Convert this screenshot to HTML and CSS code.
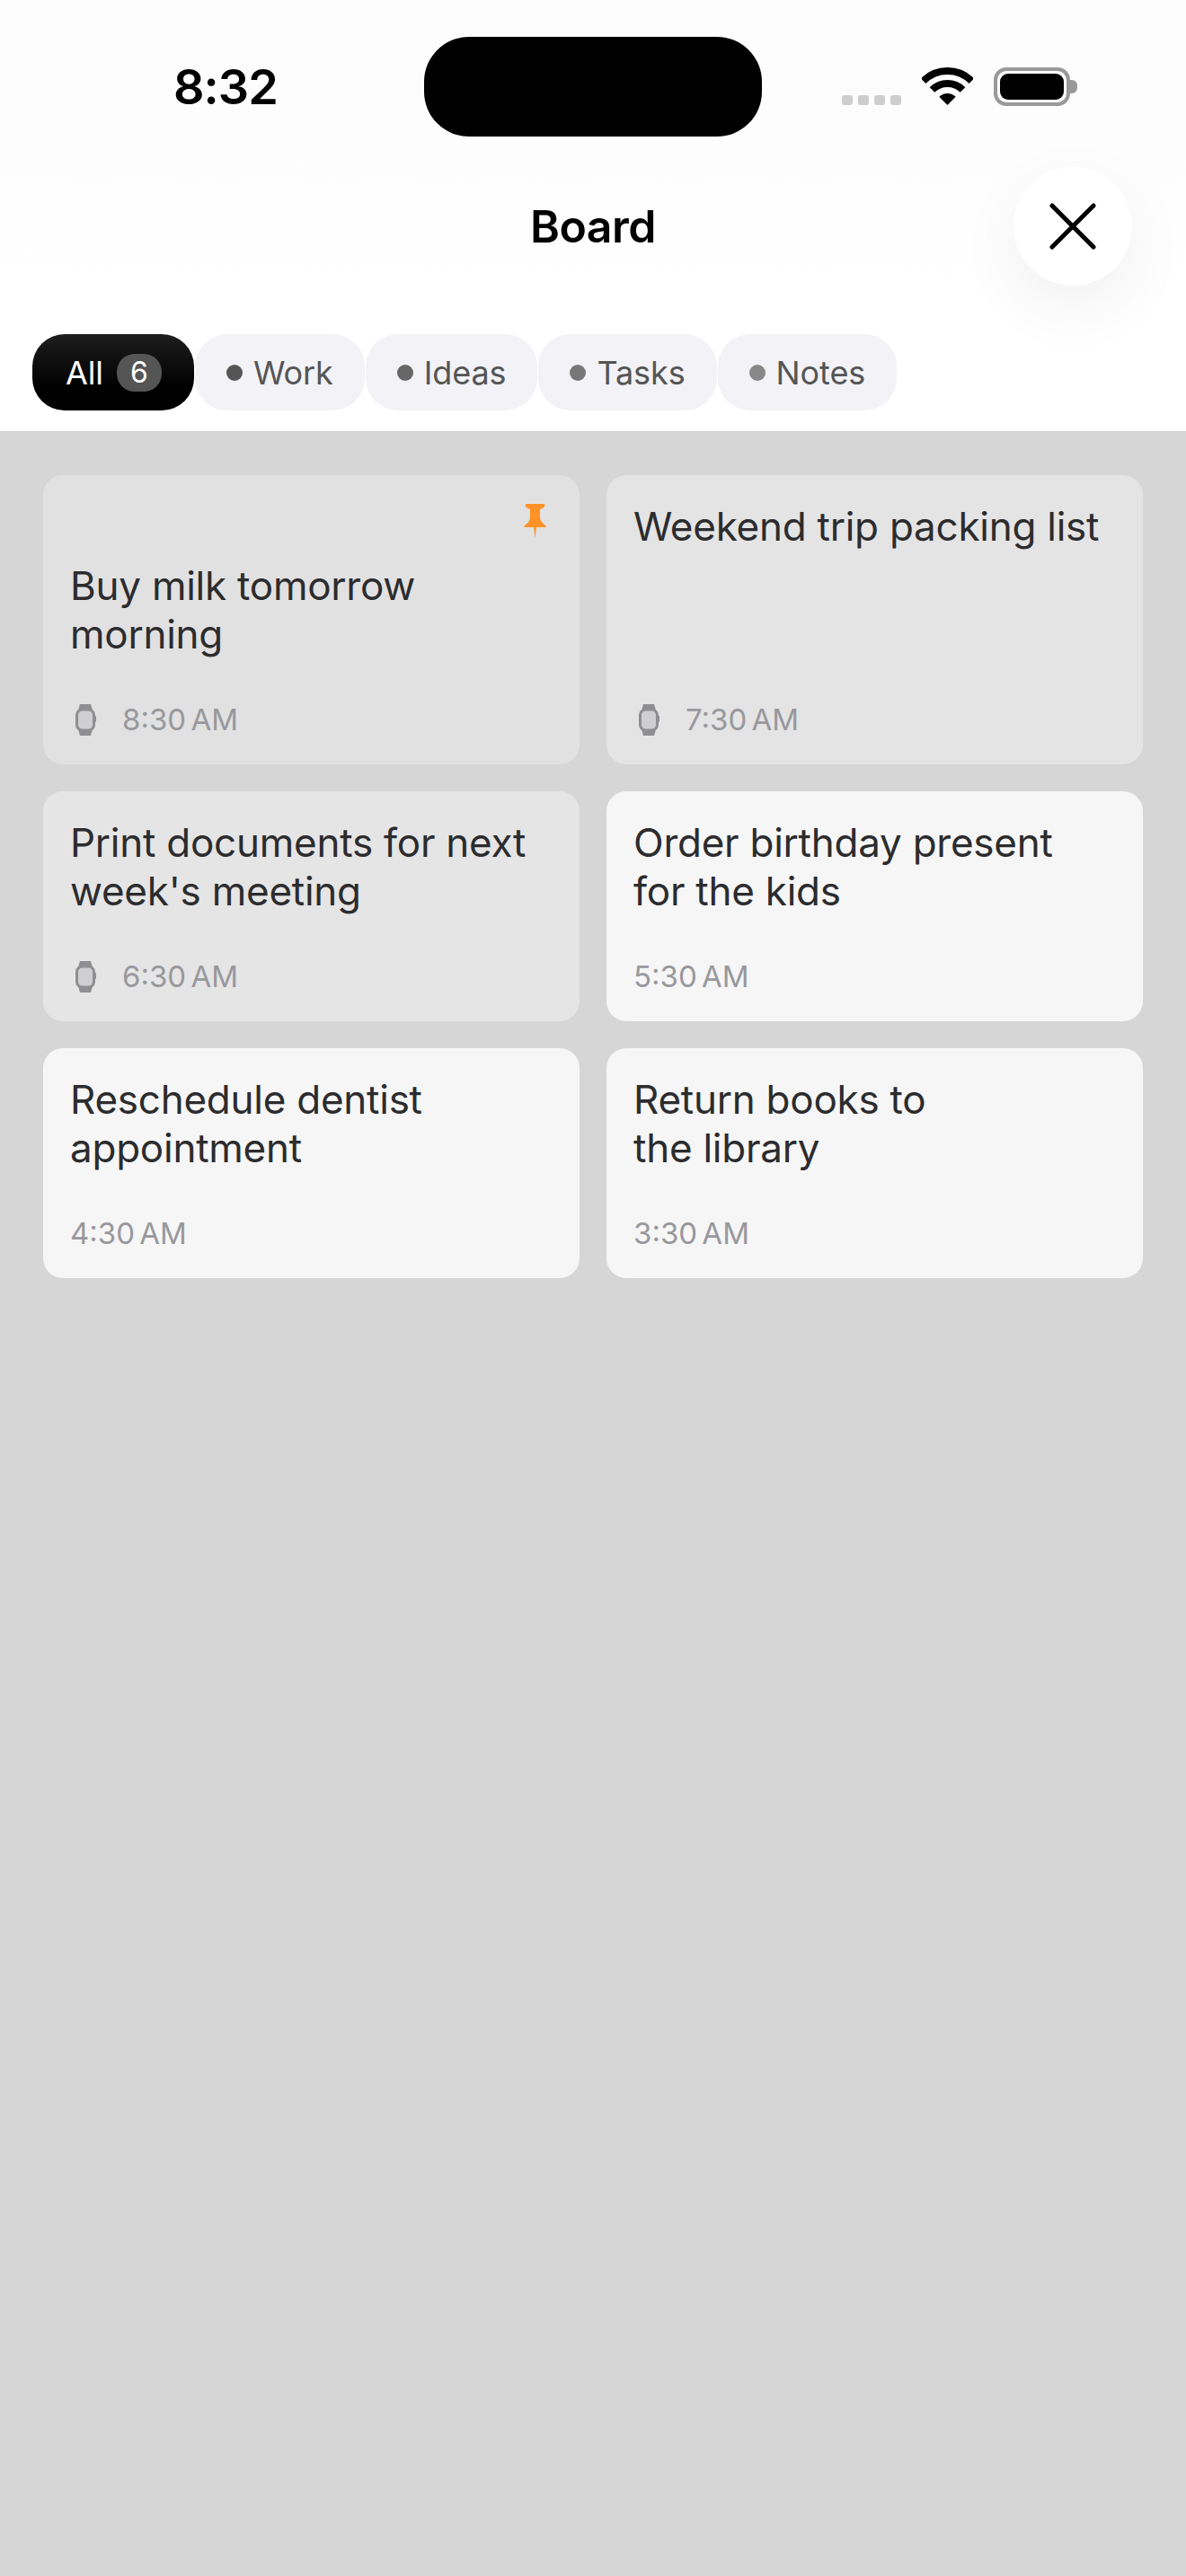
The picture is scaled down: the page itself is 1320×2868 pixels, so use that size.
FILE: index.html
```html
<!DOCTYPE html>
<html lang="en">
<head>
<meta charset="utf-8">
<title>Board</title>
<link rel="stylesheet" href="styles.css">
</head>
<body>
<header class="header">
  <div class="status">
    <div class="clock">8:32</div>
    <div class="island"></div>
    <div class="indicators">
      <div class="signal"><i></i><i></i><i></i><i></i></div>
      <svg class="wifi" width="57" height="42" viewBox="0 0 57 42"><path d="M1.63 15.13A38 38 0 0 1 55.37 15.13" fill="none" stroke="#000" stroke-width="8"/><path d="M11.53 25.03A24 24 0 0 1 45.47 25.03" fill="none" stroke="#000" stroke-width="8"/><path d="M28.5 42L19.3 32.8A13 13 0 0 1 37.7 32.8Z" fill="#000"/></svg>
      <div class="battery"><div class="battery-fill"></div><div class="battery-nub"></div></div>
    </div>
  </div>
  <div class="nav">
    <h1 class="title">Board</h1>
    <button class="close" type="button" aria-label="Close">
      <svg width="52" height="52" viewBox="0 0 52 52"><path d="M3 3L49 49M49 3L3 49" fill="none" stroke="#000" stroke-width="5" stroke-linecap="round"/></svg>
    </button>
  </div>
  <div class="tabs">
    <div class="tab tab-active">All<span class="badge">6</span></div>
    <div class="tab"><span class="dot dot-work"></span>Work</div>
    <div class="tab"><span class="dot dot-ideas"></span>Ideas</div>
    <div class="tab"><span class="dot dot-tasks"></span>Tasks</div>
    <div class="tab"><span class="dot dot-notes"></span>Notes</div>
  </div>
</header>
<main class="board">
  <article class="card card-a">
    <div class="pin-row">
      <svg width="25" height="38" viewBox="0 0 25 38"><path d="M3 0H22Q24 0 23 3Q22 5 18 6L18 14Q18 20 23 23Q25 25 25 26H14L12.5 38L11 26H0Q0 25 2 23Q7 20 7 14L7 6Q3 5 2 3Q1 0 3 0Z" fill="#ff9327"/></svg>
    </div>
    <p class="text">Buy milk tomorrow morning</p>
    <div class="meta">
      <svg class="watch" width="23" height="35" viewBox="0 0 23 35"><path d="M5 0H17L19 7H3ZM3 28H19L17 35H5Z" fill="#8e8e93"/><rect x="21" y="13" width="2" height="7" rx="1" fill="#8e8e93"/><rect x="1.5" y="6" width="19" height="23" rx="6" fill="#cfcfd1" stroke="#8e8e93" stroke-width="3"/></svg>
      <span>8:30 AM</span>
    </div>
  </article>
  <article class="card card-b">
    <p class="text">Weekend trip packing list</p>
    <div class="meta">
      <svg class="watch" width="23" height="35" viewBox="0 0 23 35"><path d="M5 0H17L19 7H3ZM3 28H19L17 35H5Z" fill="#8e8e93"/><rect x="21" y="13" width="2" height="7" rx="1" fill="#8e8e93"/><rect x="1.5" y="6" width="19" height="23" rx="6" fill="#cfcfd1" stroke="#8e8e93" stroke-width="3"/></svg>
      <span>7:30 AM</span>
    </div>
  </article>
  <article class="card card-c">
    <p class="text">Print documents for next week's meeting</p>
    <div class="meta">
      <svg class="watch" width="23" height="35" viewBox="0 0 23 35"><path d="M5 0H17L19 7H3ZM3 28H19L17 35H5Z" fill="#8e8e93"/><rect x="21" y="13" width="2" height="7" rx="1" fill="#8e8e93"/><rect x="1.5" y="6" width="19" height="23" rx="6" fill="#cfcfd1" stroke="#8e8e93" stroke-width="3"/></svg>
      <span>6:30 AM</span>
    </div>
  </article>
  <article class="card">
    <p class="text">Order birthday present<br>for the kids</p>
    <div class="meta"><span>5:30 AM</span></div>
  </article>
  <article class="card">
    <p class="text">Reschedule dentist appointment</p>
    <div class="meta"><span>4:30 AM</span></div>
  </article>
  <article class="card">
    <p class="text">Return books to<br>the library</p>
    <div class="meta"><span>3:30 AM</span></div>
  </article>
</main>
</body>
</html>
```
FILE: styles.css
```css
* { box-sizing: border-box; }
html, body { margin: 0; padding: 0; }
body {
  min-height: 2868px;
  background: #d6d6d6;
  font-family: Inter, "Liberation Sans", sans-serif;
  color: #000;
}
.header {
  background: linear-gradient(#fcfcfc, #ffffff 370px);
  border-bottom: 1px solid #cfcfcf;
  padding-bottom: 22px;
  height: 481px;
}
.status {
  display: grid;
  grid-template-columns: 472px 376px 1fr;
  padding-top: 41px;
  height: 186px;
}
.clock {
  height: 111px;
  line-height: 111px;
  padding-left: 193px;
  font-size: 54px;
  font-weight: 600;
  letter-spacing: -1px;
}
.island {
  height: 111px;
  background: #000;
  border-radius: 50px;
}
.indicators {
  display: flex;
  align-items: flex-start;
  padding: 34px 0 0 89px;
}
.signal {
  display: flex;
  gap: 6px;
  margin-top: 31px;
}
.signal i {
  width: 12px;
  height: 11px;
  border-radius: 3px;
  background: #cdcdcd;
}
.wifi { margin-left: 23px; }
.battery {
  position: relative;
  width: 85px;
  height: 43px;
  margin-left: 23px;
  padding: 3px;
  border: 4px solid #999;
  border-radius: 14px;
}
.battery-fill {
  height: 100%;
  background: #000;
  border-radius: 9px;
}
.battery-nub {
  position: absolute;
  left: 81px;
  top: 10px;
  width: 8px;
  height: 15px;
  background: #999;
  border-radius: 0 6px 6px 0;
}
.nav {
  display: flex;
  justify-content: center;
  align-items: center;
  position: relative;
  height: 132px;
}
.title {
  margin: 0;
  font-size: 50px;
  font-weight: 600;
  letter-spacing: -0.5px;
}
.close {
  position: absolute;
  left: 1128px;
  top: 0;
  width: 132px;
  height: 132px;
  display: flex;
  align-items: center;
  justify-content: center;
  padding: 0;
  border: 0;
  border-radius: 50%;
  background: #fff;
  box-shadow: 0 24px 72px rgba(0, 0, 0, 0.06);
}
.tabs {
  display: flex;
  gap: 1px;
  margin-top: 54px;
  padding-left: 36px;
}
.tab {
  display: flex;
  align-items: center;
  height: 85px;
  padding: 0 35px;
  border-radius: 36px;
  background: #f2f2f7;
  color: #555;
  font-size: 36px;
  letter-spacing: -0.1px;
}
.tab-active {
  padding: 0 36px 0 37px;
  background: linear-gradient(#1e1e1e, #000 70%);
  color: #fff;
}
.badge {
  display: flex;
  align-items: center;
  justify-content: center;
  width: 50px;
  height: 42px;
  margin-left: 15px;
  border-radius: 20px;
  background: #555;
  font-size: 32px;
}
.dot {
  width: 18px;
  height: 18px;
  margin-right: 12px;
  border-radius: 50%;
}
.dot-work { background: #555; }
.dot-ideas { background: #666; }
.dot-tasks { background: #777; }
.dot-notes { background: #888; }
.board {
  display: grid;
  grid-template-columns: 597px 597px;
  gap: 30px;
  padding: 48px 48px 0;
}
.card {
  display: flex;
  flex-direction: column;
  padding: 30px;
  border-radius: 22px;
  background: #f6f6f6;
}
.card-a { background: #e1e1e1; }
.card-b { background: #e4e4e4; }
.card-c { background: #e5e5e5; }
.pin-row {
  display: flex;
  justify-content: flex-end;
  height: 38px;
  margin: 2px 7px 26px 0;
}
.text {
  margin: 0 0 48px;
  font-size: 44px;
  line-height: 54px;
  letter-spacing: -0.25px;
  color: #2c2c2e;
}
.meta {
  display: flex;
  align-items: center;
  margin-top: auto;
  height: 40px;
  font-size: 33px;
  word-spacing: -4px;
  color: #98989d;
}
.watch { margin: 0 29px 0 6px; }
```
